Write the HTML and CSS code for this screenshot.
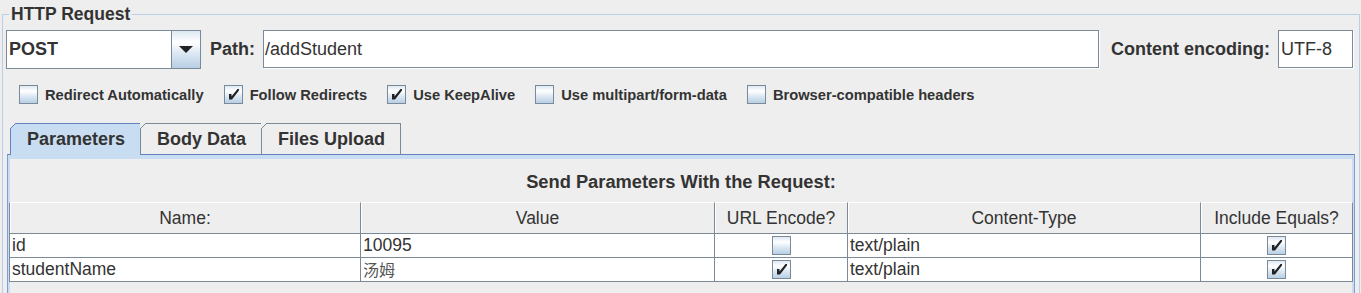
FILE: index.html
```html
<!DOCTYPE html>
<html lang="en">
<head>
    <meta charset="UTF-8">
    <meta name="viewport" content="width=device-width, initial-scale=1.0">
    <title>HTTP Request</title>
    <link rel="stylesheet" href="styles.css">
</head>
<body>
    <fieldset class="http-request">
        <legend>HTTP Request</legend>

        <!-- method / path / encoding -->
        <div class="request-row">
            <div class="combo">
                <span class="combo-value">POST</span>
                <span class="combo-arrow">
                    <svg width="14" height="7" viewBox="0 0 14 7"><path d="M0 0H14L7 7Z" fill="#222"/></svg>
                </span>
            </div>
            <label class="field-label">Path:</label>
            <div class="text-field path-field">/addStudent</div>
            <label class="field-label encoding-label">Content encoding:</label>
            <div class="text-field encoding-field">UTF-8</div>
        </div>

        <!-- options -->
        <div class="options">
            <span class="option"><span class="check"></span>Redirect Automatically</span>
            <span class="option"><span class="check"><svg width="17" height="17" viewBox="0 0 17 17"><path d="M4 8H6.5V10.5L12.5 3H14V4.5L7 13.5H4Z" fill="#222"/></svg></span>Follow Redirects</span>
            <span class="option"><span class="check"><svg width="17" height="17" viewBox="0 0 17 17"><path d="M4 8H6.5V10.5L12.5 3H14V4.5L7 13.5H4Z" fill="#222"/></svg></span>Use KeepAlive</span>
            <span class="option"><span class="check"></span>Use multipart/form-data</span>
            <span class="option"><span class="check"></span>Browser-compatible headers</span>
        </div>

        <!-- tabs -->
        <div class="tabs">
            <span class="tab selected">Parameters</span>
            <span class="tab">Body Data</span>
            <span class="tab last">Files Upload</span>
        </div>
        <div class="tab-panel">
            <div class="panel-title">Send Parameters With the Request:</div>
            <table class="params">
                <thead>
                    <tr>
                        <th class="col-name">Name:</th>
                        <th class="col-value">Value</th>
                        <th class="col-encode">URL Encode?</th>
                        <th class="col-type">Content-Type</th>
                        <th class="col-equals">Include Equals?</th>
                    </tr>
                </thead>
                <tbody>
                    <tr>
                        <td>id</td>
                        <td>10095</td>
                        <td><span class="check"></span></td>
                        <td>text/plain</td>
                        <td><span class="check"><svg width="17" height="17" viewBox="0 0 17 17"><path d="M4 8H6.5V10.5L12.5 3H14V4.5L7 13.5H4Z" fill="#222"/></svg></span></td>
                    </tr>
                    <tr>
                        <td>studentName</td>
                        <td class="cjk">汤姆</td>
                        <td><span class="check"><svg width="17" height="17" viewBox="0 0 17 17"><path d="M4 8H6.5V10.5L12.5 3H14V4.5L7 13.5H4Z" fill="#222"/></svg></span></td>
                        <td>text/plain</td>
                        <td><span class="check"><svg width="17" height="17" viewBox="0 0 17 17"><path d="M4 8H6.5V10.5L12.5 3H14V4.5L7 13.5H4Z" fill="#222"/></svg></span></td>
                    </tr>
                </tbody>
            </table>
        </div>
    </fieldset>
</body>
</html>
```

FILE: styles.css
```css
html, body {
    margin: 0;
    height: 100%;
    overflow: hidden;
}
body {
    background: #eeeeee;
    color: #333333;
    font-family: "Liberation Sans", Arial, sans-serif;
}
.http-request {
    margin: 4px 1px 0 2px;
    padding: 0;
    border: 1px solid #b8cfe5;
}
.http-request legend {
    margin-left: 6px;
    padding: 0 2px;
    font-size: 17.5px;
    font-weight: bold;
    line-height: 20px;
}

.request-row {
    display: flex;
    align-items: flex-start;
    margin: 6px 6px 0 3px;
}
.combo {
    display: flex;
    width: 195px;
    height: 39px;
    box-sizing: border-box;
    border: 1px solid #7a8a99;
    background: #fff;
}
.combo-value {
    flex: 1;
    padding-left: 2px;
    font-size: 18px;
    font-weight: bold;
    line-height: 37px;
}
.combo-arrow {
    width: 28px;
    display: flex;
    align-items: center;
    justify-content: center;
    border-left: 1px solid #7a8a99;
    background: linear-gradient(#dde8f3 0%, #fff 30%, #dde8f3 60%, #b8cfe5 100%);
}
.field-label {
    margin: 0 8px 0 9px;
    font-size: 18px;
    font-weight: bold;
    line-height: 38px;
}
.encoding-label {
    margin-left: 12px;
}
.text-field {
    height: 38px;
    box-sizing: border-box;
    padding-left: 1px;
    border: 1px solid #7a8a99;
    background: #fff;
    box-shadow: 1px 1px 0 #fff;
    font-size: 18px;
    line-height: 36px;
}
.path-field {
    flex: 1;
}
.encoding-field {
    width: 75px;
    padding-left: 2px;
}

.options {
    display: flex;
    align-items: center;
    gap: 20px;
    margin: 16px 0 0 16px;
}
.option {
    display: flex;
    align-items: center;
    gap: 7px;
    font-size: 14.7px;
    font-weight: bold;
}
.check {
    display: block;
    width: 19px;
    height: 19px;
    box-sizing: border-box;
    border: 1px solid #7a8a99;
    background: linear-gradient(#dde8f3 0%, #fff 30%, #dde8f3 60%, #b8cfe5 100%);
}
.check svg {
    display: block;
}

.tabs {
    display: flex;
    align-items: flex-end;
    margin: 19px 0 0 7px;
}
.tab {
    position: relative;
    padding: 0 15px 0 16px;
    border-top: 1px solid #7a8a99;
    border-left: 1px solid #7a8a99;
    font-size: 18px;
    font-weight: bold;
    line-height: 30px;
}
.tab::before {
    content: "";
    position: absolute;
    top: -1px;
    left: -1px;
    width: 6px;
    height: 6px;
    background: linear-gradient(135deg, #eeeeee 0 42%, #7a8a99 42% 58%, transparent 58%);
}
.tab.last {
    border-right: 1px solid #7a8a99;
}
.tab.selected {
    z-index: 1;
    margin-bottom: -1px;
    padding-bottom: 1px;
    background: #c8ddf2;
    border-color: #6382bf;
}
.tab.selected::before {
    background: linear-gradient(135deg, #eeeeee 0 42%, #6382bf 42% 58%, transparent 58%);
}

.tab-panel {
    margin: 0 4px 0 4px;
    padding-bottom: 40px;
    border: 1px solid #6382bf;
    border-bottom: none;
    border-left-color: #7f9dd3;
    border-right-color: #7f9dd3;
    box-shadow: inset 0 4px 0 #c8ddf2, inset 2px 0 0 #c8ddf2, inset -2px 0 0 #c8ddf2;
}
.panel-title {
    padding-top: 17px;
    padding-bottom: 10px;
    text-align: center;
    font-size: 18.3px;
    font-weight: bold;
    line-height: 20px;
}

.params {
    width: 1344px;
    margin: 0 1px;
    table-layout: fixed;
    border-collapse: separate;
    border-spacing: 0;
    font-size: 17.5px;
}
.params th, .params td {
    box-sizing: border-box;
    padding: 0 2px;
    border-right: 1px solid #7a8a99;
    border-bottom: 1px solid #7a8a99;
    white-space: nowrap;
    overflow: hidden;
}
.params th:first-child, .params td:first-child {
    border-left: 1px solid #7a8a99;
}
.params th {
    height: 32px;
    border-top: 1px solid #fff;
    background: #eeeeee;
    box-shadow: inset 1px 0 0 #fff;
    font-weight: normal;
    text-align: center;
    line-height: 30px;
}
.params td {
    height: 24px;
    background: #fff;
    line-height: 23px;
}
.params td .check {
    margin: 0 auto;
}
.col-name { width: 352px; }
.col-value { width: 354px; }
.col-encode { width: 133px; }
.col-type { width: 353px; }
.col-equals { width: 152px; }
.cjk {
    color: #555;
    font-family: "Noto Sans CJK SC", sans-serif;
    font-size: 16px;
}
```
